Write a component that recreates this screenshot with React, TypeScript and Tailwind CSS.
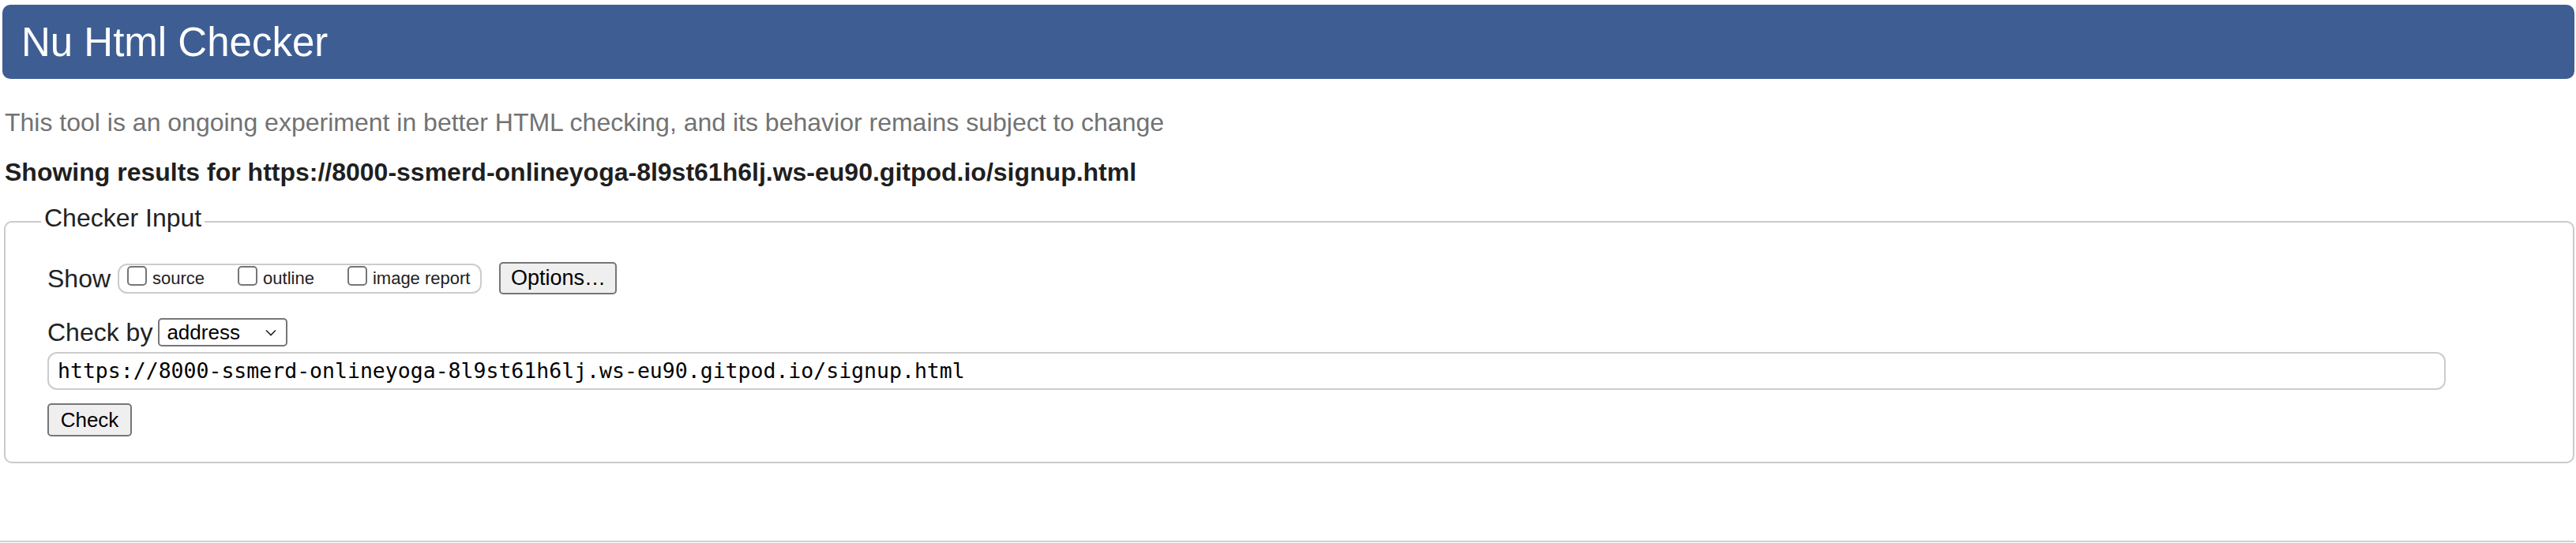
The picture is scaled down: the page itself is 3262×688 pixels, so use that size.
export default function App() {
  const url = "https://8000-ssmerd-onlineyoga-8l9st61h6lj.ws-eu90.gitpod.io/signup.html";

  return (
    <div className="min-h-[688px] bg-white pl-[3px] pr-[2px] font-['Liberation_Sans',Arial,sans-serif] text-[#222]">
      {/* Title bar */}
      <h1 className="mt-[6px] flex h-[94px] items-center rounded-[10px] bg-[#3e5e93] pl-[24px] text-[51px] leading-none font-normal text-white">
        Nu Html Checker
      </h1>

      <p className="mt-[37px] pl-[3px] text-[32px] leading-[36px] text-[#727272]">
        This tool is an ongoing experiment in better HTML checking, and its behavior remains subject to change
      </p>

      <p className="mt-[27px] pl-[3px] text-[32px] leading-[36px] font-bold text-[#1f1f1f]">
        Showing results for {url}
      </p>

      {/* Checker input form */}
      <fieldset className="mt-[22px] ml-[2px] rounded-[10px] border-2 border-[#cacaca] pt-[28px] pb-[32px] pl-[53px]">
        <legend className="ml-[-8px] px-[4px] pb-[10px] text-[32px] leading-[36px] text-[#222]">
          Checker Input
        </legend>

        <div className="flex items-center">
          <span className="text-[32px] leading-[36px]">Show</span>
          <div className="ml-[9px] flex h-[38px] items-center rounded-[12px] border-2 border-[#cccccc] pr-[13px] pl-[10px] text-[22px]">
            <label className="flex items-center gap-[7px]">
              <input
                type="checkbox"
                className="mb-[6px] h-[25px] w-[25px] appearance-none rounded-[5px] border-2 border-[#767676] bg-white"
              />
              <span>source</span>
            </label>
            <label className="ml-[42px] flex items-center gap-[7px]">
              <input
                type="checkbox"
                className="mb-[6px] h-[25px] w-[25px] appearance-none rounded-[5px] border-2 border-[#767676] bg-white"
              />
              <span>outline</span>
            </label>
            <label className="ml-[42px] flex items-center gap-[7px]">
              <input
                type="checkbox"
                className="mb-[6px] h-[25px] w-[25px] appearance-none rounded-[5px] border-2 border-[#767676] bg-white"
              />
              <span>image report</span>
            </label>
          </div>
          <button className="ml-[22px] h-[41px] w-[149px] rounded-[5px] border-2 border-[#767676] bg-[#efefef] text-[27px] leading-none text-black">
            Options…
          </button>
        </div>

        <div className="mt-[30px] flex items-center">
          <span className="text-[32px] leading-[36px]">Check by</span>
          <div className="ml-[7px] flex h-[36px] w-[164px] items-center justify-between rounded-[5px] border-2 border-[#767676] bg-white pr-[12px] pl-[9px] text-[26px] leading-none text-black">
            <span>address</span>
            <svg width="14" height="9" viewBox="0 0 14 9" fill="none">
              <path d="M1 1.5L7 7.5L13 1.5" stroke="#222" strokeWidth="1.6" />
            </svg>
          </div>
        </div>

        <div className="mt-[7px] flex h-[48px] w-[3037px] items-center rounded-[12px] border-2 border-[#cccccc] bg-white pl-[11px] font-['DejaVu_Sans_Mono',monospace] text-[26.5px] text-black">
          {url}
        </div>

        <button className="mt-[17px] block h-[42px] w-[107px] rounded-[5px] border-2 border-[#767676] bg-[#efefef] text-[26px] leading-none text-black">
          Check
        </button>
      </fieldset>

      <hr className="mt-[98px] ml-[-3px] border-t-2 border-[#d0d0d0]" />
    </div>
  );
}
